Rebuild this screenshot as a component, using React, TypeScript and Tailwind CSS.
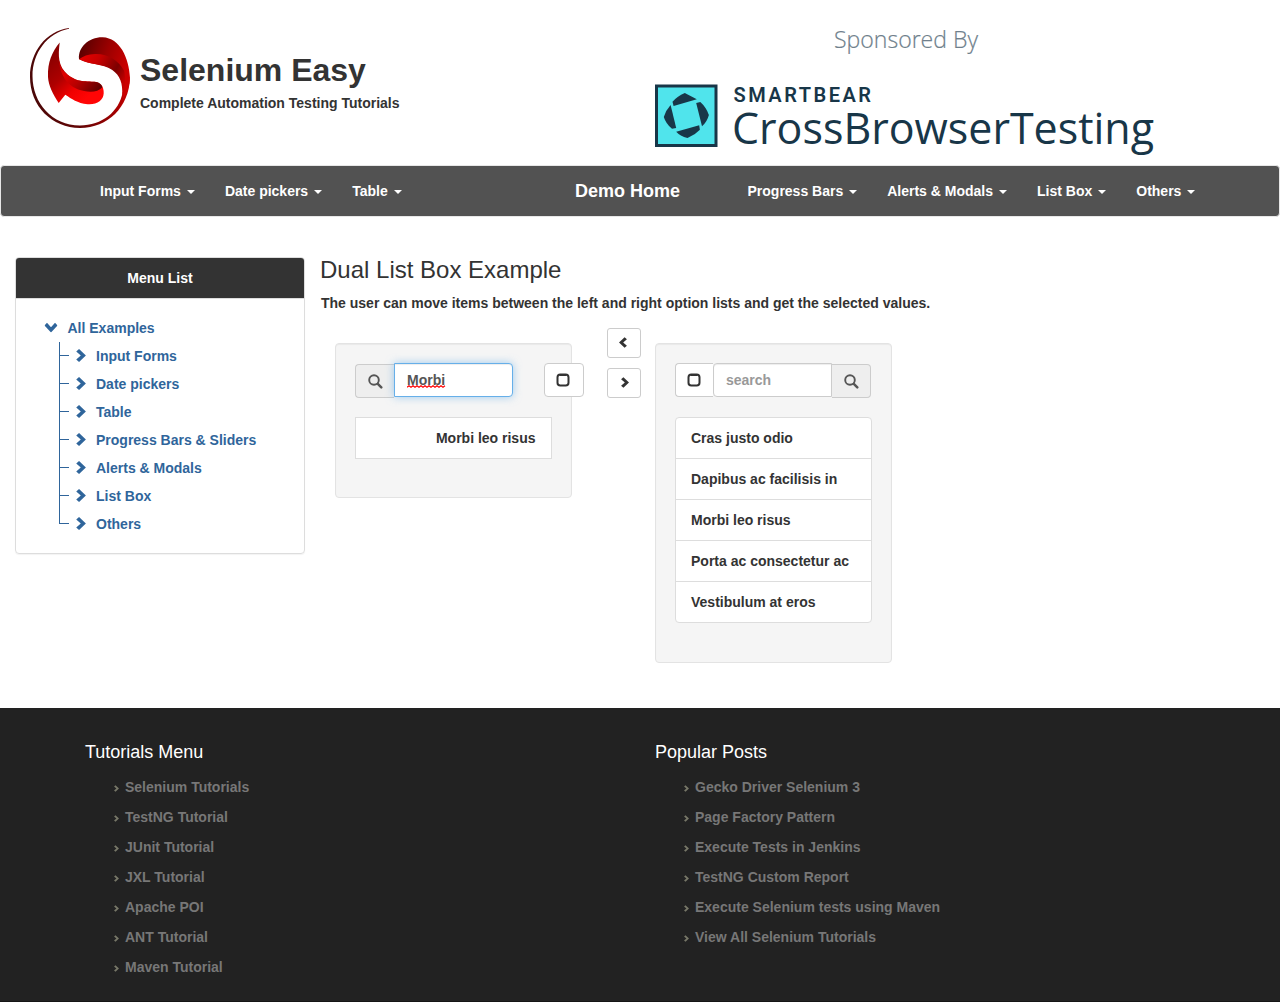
import React from 'react';

type IconProps = { className?: string };

const ChevronRight = ({ className = '' }: IconProps) => (
  <svg viewBox="0 0 9 12" className={className} fill="currentColor" aria-hidden="true">
    <path d="M2.700 0 9 6 2.700 12 .1 9.700 4.300 6 .1 2.300z" />
  </svg>
);

const SearchIcon = ({ className = '' }: IconProps) => (
  <svg viewBox="0 0 15 15" className={className} fill="none" stroke="currentColor" aria-hidden="true">
    <circle cx="6" cy="6" r="4.800" strokeWidth="1.900" />
    <path d="M9.800 9.800l3.500 3.500" strokeWidth="2.500" strokeLinecap="round" />
  </svg>
);

const UncheckedIcon = () => (
  <svg viewBox="0 0 14 14" className="-ml-[2px] h-[14px] w-[14px]" fill="none" stroke="#333" aria-hidden="true">
    <rect x="1.500" y="1.500" width="11" height="11" rx="2.800" strokeWidth="2" />
    <path d="M3.500 2h7" strokeWidth="2" />
  </svg>
);

const SeleniumLogo = () => (
  <svg viewBox="0 0 100 100" className="h-[100px] w-[100px] shrink-0" aria-hidden="true">
    <defs>
      <linearGradient id="ring" x1="0" y1="0.5" x2="1" y2="0.4">
        <stop offset="0" stopColor="#4a0808" />
        <stop offset="0.45" stopColor="#640505" />
        <stop offset="0.8" stopColor="#a00000" />
        <stop offset="1" stopColor="#d00000" />
      </linearGradient>
      <linearGradient id="top" x1="0.05" y1="0.2" x2="0.9" y2="0.6">
        <stop offset="0" stopColor="#5e0000" />
        <stop offset="0.5" stopColor="#9c0000" />
        <stop offset="1" stopColor="#cc0000" />
      </linearGradient>
      <linearGradient id="topFold" x1="0" y1="0.1" x2="1" y2="0.6">
        <stop offset="0" stopColor="#e80000" />
        <stop offset="0.35" stopColor="#c80000" />
        <stop offset="0.75" stopColor="#7c0000" />
        <stop offset="1" stopColor="#c40000" />
      </linearGradient>
      <linearGradient id="leaf" x1="0.1" y1="0.1" x2="0.75" y2="0.85">
        <stop offset="0" stopColor="#850000" />
        <stop offset="0.45" stopColor="#ae0000" />
        <stop offset="0.75" stopColor="#f00000" />
        <stop offset="1" stopColor="#ff0505" />
      </linearGradient>
      <linearGradient id="leafFold" x1="0" y1="0.1" x2="1" y2="0.8">
        <stop offset="0" stopColor="#b00000" />
        <stop offset="0.3" stopColor="#e00000" />
        <stop offset="0.6" stopColor="#b80000" />
        <stop offset="1" stopColor="#640000" />
      </linearGradient>
    </defs>
    <path
      fill="url(#ring)"
      d="M39 0C16 3 0 24 0 49c0 29 22 51 50 51 28 0 49-21 50-50L92.700 64C89 84 72 97.400 50 97.400 22 97.400 2.500 75 2.500 48 2.500 25 17 5 39 .7z"
    />
    <path
      fill="url(#top)"
      d="M49 31C48 19 59 9 72.700 9.300 90 10 99 30 100 50c-.3 7-3 15-7.300 22C95 55 90 44 80 40 71 35.500 60 37 49 31z"
    />
    <path
      fill="url(#topFold)"
      d="M49 31.300C53 28 58 26.500 65 26c13-.5 24 7 29 16.500 2 8 1 17-1.800 25.500C93 55 90 47.500 82.300 42 72 35.500 60 37 49 31.300z"
    />
    <path
      fill="url(#leaf)"
      d="M29.700 14.500C22 24 17.500 34 18 49c.5 9 5 17 10.700 26L35.300 66.700C42 71 47 75 57.700 76.300 67 77 73.500 72 73.700 65.300 74 58 70 54 64.300 53.700 50 53 47 53.500 37.700 46.700 28 38 28 28 29.700 14.500z"
    />
    <path
      fill="url(#leafFold)"
      d="M28.600 25C28.500 35 31 41.500 37.700 46.700 47 53.500 50 53 64.300 53.700 69 54 71.500 56 72.500 59.300 68 64 61 64.300 54 63 38 60 28 47 28.600 25z"
    />
  </svg>
);

const SponsorLogo = () => (
  <svg viewBox="0 0 520 150" className="h-[150px] w-[520px]" aria-label="SmartBear CrossBrowserTesting">
    <text x="179" y="38" textLength="144" lengthAdjust="spacingAndGlyphs" fontFamily="Open Sans" fontWeight="300" fontSize="24" fill="#6f7f8c" stroke="#6f7f8c" strokeWidth="0.2">
      Sponsored By
    </text>
    <rect x="1.500" y="76" width="59.500" height="59.500" fill="#50e4ec" stroke="#183648" strokeWidth="3" />
    <g fill="#183648" transform="translate(0 74)">
      <path d="M17.500 17.700Q22 12.500 29.800 9L41.800 15.300 18.600 22z" />
      <path d="M41.200 19 45.300 18Q51 23 53.900 31 52 38 47 42.300z" />
      <path d="M21.200 47.700 44.200 41.300 44.900 45.700Q40 51 32.500 54 25 52 21.200 47.700z" />
      <path d="M15.600 21 21.200 44 17 44.700Q11 40 8.800 33 11 26 15.600 21z" />
    </g>
    <text x="78.500" y="92" textLength="137.500" fontFamily="Roboto" fontWeight="600" fontSize="20" fill="#183648">
      SMARTBEAR
    </text>
    <text x="77" y="133.700" textLength="422" lengthAdjust="spacingAndGlyphs" fontFamily="Open Sans" fontWeight="400" fontSize="44" fill="#183648">
      CrossBrowserTesting
    </text>
  </svg>
);

const NavItem = ({ label }: { label: string }) => (
  <a className="flex items-center px-[15px] text-sm leading-5 text-white">
    {label}
    <span className="ml-[6px] mt-px border-x-4 border-t-4 border-x-transparent border-t-white" />
  </a>
);

const menuItems = ['Input Forms', 'Date pickers', 'Table', 'Progress Bars & Sliders', 'Alerts & Modals', 'List Box', 'Others'];
const rightItems = ['Cras justo odio', 'Dapibus ac facilisis in', 'Morbi leo risus', 'Porta ac consectetur ac', 'Vestibulum at eros'];
const tutorials = ['Selenium Tutorials', 'TestNG Tutorial', 'JUnit Tutorial', 'JXL Tutorial', 'Apache POI', 'ANT Tutorial', 'Maven Tutorial'];
const posts = [
  'Gecko Driver Selenium 3',
  'Page Factory Pattern',
  'Execute Tests in Jenkins',
  'TestNG Custom Report',
  'Execute Selenium tests using Maven',
  'View All Selenium Tutorials',
];

const FooterColumn = ({ title, items }: { title: string; items: string[] }) => (
  <div className="w-[570px]">
    <h3 className="text-lg font-normal leading-5 text-white">{title}</h3>
    <ul className="mt-[10px] pl-7">
      {items.map((item) => (
        <li key={item} className="flex h-[30px] items-center text-[#777]">
          <ChevronRight className="ml-[0.500px] mt-[3px] h-[7px] w-[5px] text-[#777768]" />
          <a className="ml-[6.500px]">{item}</a>
        </li>
      ))}
    </ul>
  </div>
);

const well =
  'w-[237px] rounded border border-[#e3e3e3] bg-[#f5f5f5] px-[19px] pt-[19px] shadow-[inset_0_1px_1px_rgba(0,0,0,0.05)]';

export default function App() {
  return (
    <div className="h-[1002px] w-[1280px] overflow-hidden bg-white font-['Liberation_Sans',Arial,sans-serif] text-sm font-bold leading-5 text-[#333]">
      <header className="flex h-[165px]">
        <div className="flex w-[655px] pl-[30px] pt-[28px]">
          <SeleniumLogo />
          <div className="pl-[10px] pt-[24px]">
            <h1 className="text-[32px] leading-9">Selenium Easy</h1>
            <p className="mt-[5px]">Complete Automation Testing Tutorials</p>
          </div>
        </div>
        <div className="pt-[10px]">
          <SponsorLogo />
        </div>
      </header>

      <nav className="flex h-[52px] rounded border border-[#e7e7e7] bg-[#525252]">
        <div className="flex w-[559px] pl-[84px]">
          <NavItem label="Input Forms" />
          <NavItem label="Date pickers" />
          <NavItem label="Table" />
        </div>
        <a className="flex w-[172.500px] items-center pl-[15px] text-lg leading-5 text-white">Demo Home</a>
        <div className="flex">
          <NavItem label="Progress Bars" />
          <NavItem label="Alerts & Modals" />
          <NavItem label="List Box" />
          <NavItem label="Others" />
        </div>
      </nav>

      <main className="flex h-[491px] px-[15px] pt-10">
        <aside className="h-[297px] w-[290px] rounded border border-[#ddd] shadow-[0_1px_1px_rgba(0,0,0,0.05)]">
          <div className="h-[41px] rounded-t-[3px] border-b border-[#ddd] bg-[#333] pt-[10px] text-center text-white">Menu List</div>
          <div className="pl-[29px] pt-[19px] text-[#2f659b]">
            <div className="flex h-5 items-center">
              <ChevronRight className="-mt-[2px] h-[13px] w-[10px] translate-x-px rotate-90" />
              <a className="ml-[12.500px]">All Examples</a>
            </div>
            <ul className="pl-[14px] pt-1">
              {menuItems.map((item, i) => (
                <li key={item} className="flex h-7 items-center">
                  <span className={i === menuItems.length - 1 ? 'h-7 w-px' : 'h-7 w-px bg-[#2f659b]'}>
                    {i === menuItems.length - 1 && <span className="block h-[14px] w-px bg-[#2f659b]" />}
                  </span>
                  <span className="-mt-px h-px w-[9px] bg-[#2f659b]" />
                  <ChevronRight className="-mt-px ml-[7px] h-[13px] w-[10px]" />
                  <a className="ml-[10px]">{item}</a>
                </li>
              ))}
            </ul>
          </div>
        </aside>

        <section className="pl-[15px]">
          <h2 className="text-2xl font-normal leading-[26px]">Dual List Box Example</h2>
          <p className="mt-[10px] pl-px">The user can move items between the left and right option lists and get the selected values.</p>
          <div className="mt-[15px] flex pl-[15px]">
            <div className={`${well} mt-[15px] h-[155px]`}>
              <div className="flex w-[229px] items-start">
                <span className="mt-px flex h-[34px] w-[39px] items-center justify-center rounded-l border border-r-0 border-[#ccc] bg-[#eee] text-[#555]">
                  <SearchIcon className="h-[15px] w-[15px]" />
                </span>
                <div className="relative h-[34px] w-[119px] rounded-r border border-[#66afe9] bg-white px-3 py-[6px] text-[#555] shadow-[inset_0_1px_1px_rgba(0,0,0,0.075),0_0_8px_rgba(102,175,233,0.6)]">
                  Morbi
                  <svg className="absolute left-3 top-[21px] h-[3px] w-[39px]" viewBox="0 0 39 3" fill="none" stroke="#f00" strokeWidth="1.100" aria-hidden="true">
                    <path d="M0 2.300 2 .7 4 2.300 6 .7 8 2.300 10 .7 12 2.300 14 .7 16 2.300 18 .7 20 2.300 22 .7 24 2.300 26 .7 28 2.300 30 .7 32 2.300 34 .7 36 2.300 38 .7" />
                  </svg>
                </div>
                <button className="ml-auto flex h-[34px] w-[40px] items-center justify-center rounded border border-[#ccc] bg-white">
                  <UncheckedIcon />
                </button>
              </div>
              <div className="mt-[19px] h-[42px] w-[197px] border border-[#ddd] bg-white pl-[15px] pr-[15.500px] py-[10px] text-right">Morbi leo risus</div>
            </div>

            <div className="ml-[35px] flex w-12 flex-col gap-[10px]">
              <button className="flex h-[30px] w-[34px] items-center justify-center rounded-[3px] border border-[#ccc] bg-white">
                <ChevronRight className="-mt-px mr-[2px] h-[11px] w-2 rotate-180" />
              </button>
              <button className="flex h-[30px] w-[34px] items-center justify-center rounded-[3px] border border-[#ccc] bg-white">
                <ChevronRight className="-mt-px ml-px h-[11px] w-2" />
              </button>
            </div>

            <div className={`${well} mt-[15px] h-[320px]`}>
              <div className="flex w-[197px] items-start">
                <button className="flex h-[34px] w-[38px] items-center justify-center rounded-l border border-r-0 border-[#ccc] bg-white">
                  <UncheckedIcon />
                </button>
                <div className="h-[34px] w-[119px] rounded-l border border-[#ccc] bg-white px-3 py-[6px] text-[#999] shadow-[inset_0_1px_1px_rgba(0,0,0,0.075)]">search</div>
                <span className="mt-px flex h-[34px] w-[39px] items-center justify-center rounded-r border border-l-0 border-[#ccc] bg-[#eee] text-[#555]">
                  <SearchIcon className="h-[15px] w-[15px]" />
                </span>
              </div>
              <ul className="mt-[19px] w-[197px] divide-y divide-[#ddd] rounded border border-[#ddd] bg-white">
                {rightItems.map((item) => (
                  <li key={item} className="px-[15px] py-[10px]">{item}</li>
                ))}
              </ul>
            </div>
          </div>
        </section>
      </main>

      <footer className="flex h-[294px] border-b border-[#151515] bg-[#222] pl-[85px] pt-[34px]">
        <FooterColumn title="Tutorials Menu" items={tutorials} />
        <FooterColumn title="Popular Posts" items={posts} />
      </footer>
    </div>
  );
}
